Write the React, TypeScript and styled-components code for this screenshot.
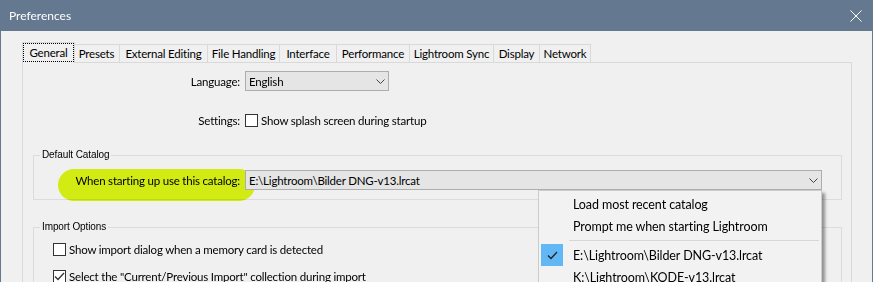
import styled, { createGlobalStyle } from "styled-components";

const GlobalStyle = createGlobalStyle`
  html, body {
    margin: 0;
    padding: 0;
    background: #f0f0f0;
  }
  body {
    font-family: Lato, "Noto Sans", sans-serif;
    font-size: 11.5px;
    letter-spacing: -0.2px;
    color: #000;
  }
`;

const tabs = [
  { label: "General", w: 53 },
  { label: "Presets", w: 47 },
  { label: "External Editing", w: 89 },
  { label: "File Handling", w: 73 },
  { label: "Interface", w: 58 },
  { label: "Performance", w: 74 },
  { label: "Lightroom Sync", w: 85 },
  { label: "Display", w: 47 },
  { label: "Network", w: 52 },
];

const Chevron = () => (
  <svg width="9" height="5" viewBox="0 0 9 5" aria-hidden="true">
    <polyline points="0.5,0.5 4.5,4.5 8.5,0.5" fill="none" stroke="#444" strokeWidth="1" />
  </svg>
);

const Tick = ({ color = "#222" }: { color?: string }) => (
  <svg width="11" height="9" viewBox="0 0 11 9" aria-hidden="true">
    <polyline points="1,4.5 4,7.5 10,1" fill="none" stroke={color} strokeWidth="1.3" />
  </svg>
);

export default function App() {
  return (
    <>
      <GlobalStyle />
      <Window>
        <TitleBar>
          <span>Preferences</span>
          <CloseIcon width="12" height="12" viewBox="0 0 12 12" aria-label="Close">
            <line x1="0.5" y1="0.5" x2="11.5" y2="11.5" stroke="#fff" strokeWidth="1" />
            <line x1="11.5" y1="0.5" x2="0.5" y2="11.5" stroke="#fff" strokeWidth="1" />
          </CloseIcon>
        </TitleBar>

        <Body>
          <TabBar>
            {tabs.map((t, i) => (
              <Tab key={t.label} $w={t.w} $active={i === 0} $after={i === 1 ? 2 : i > 1 ? 1 : 0}>
                {i === 0 ? <Focus>{t.label}</Focus> : t.label}
              </Tab>
            ))}
          </TabBar>

          <Panel>
            <FormGrid $label={217}>
              <Label>Language:</Label>
              <Combo $w={144}>
                <span>English</span>
                <Chevron />
              </Combo>

              <Label>Settings:</Label>
              <CheckRow>
                <Box />
                <span>Show splash screen during startup</span>
              </CheckRow>
            </FormGrid>

            <Group $top={18}>
              <Legend>Default Catalog</Legend>
              <FormGrid $label={206}>
                <Label>
                  <Marker />
                  When starting up use this catalog:
                </Label>
                <ComboWrap>
                  <Combo>
                    <span>E:\Lightroom\Bilder DNG-v13.lrcat</span>
                    <Chevron />
                  </Combo>
                  <Menu>
                    <MenuItem>
                      <CheckCell />
                      Load most recent catalog
                    </MenuItem>
                    <MenuItem>
                      <CheckCell />
                      Prompt me when starting Lightroom
                    </MenuItem>
                    <Separator />
                    <MenuItem>
                      <CheckCell $on>
                        <Tick />
                      </CheckCell>
                      E:\Lightroom\Bilder DNG-v13.lrcat
                    </MenuItem>
                    <MenuItem>
                      <CheckCell />
                      K:\Lightroom\KODE-v13.lrcat
                    </MenuItem>
                  </Menu>
                </ComboWrap>
              </FormGrid>
            </Group>

            <Group $top={20}>
              <Legend>Import Options</Legend>
              <CheckList>
                <CheckRow>
                  <Box />
                  <span>Show import dialog when a memory card is detected</span>
                </CheckRow>
                <CheckRow>
                  <Box>
                    <Tick color="#333" />
                  </Box>
                  <span>Select the "Current/Previous Import" collection during import</span>
                </CheckRow>
              </CheckList>
            </Group>
          </Panel>
        </Body>
      </Window>
    </>
  );
}

const Window = styled.div`
  width: 873px;
  height: 282px;
  box-sizing: border-box;
  overflow: hidden;
  display: flex;
  flex-direction: column;
  background: #f0f0f0;
  border-left: 1px solid #647890;
  border-right: 1px solid #647890;
`;

const TitleBar = styled.div`
  height: 31px;
  flex: none;
  display: flex;
  align-items: center;
  justify-content: space-between;
  padding: 0 10px 0 8px;
  background: #647890;
  color: #fff;
  font-size: 12px;
  letter-spacing: 0;
`;

const CloseIcon = styled.svg`
  display: block;
`;

const Body = styled.div`
  flex: 1;
  display: flex;
  flex-direction: column;
  padding: 11px 0 0 21px;
`;

const TabBar = styled.div`
  display: flex;
  align-items: flex-end;
  height: 20px;
  flex: none;
  position: relative;
  z-index: 1;
`;

const Tab = styled.div<{ $w: number; $active?: boolean; $after: number }>`
  box-sizing: border-box;
  width: ${(p) => p.$w}px;
  height: ${(p) => (p.$active ? 21 : 18)}px;
  margin-bottom: ${(p) => (p.$active ? -1 : 0)}px;
  margin-left: -${(p) => p.$after}px;
  position: relative;
  z-index: ${(p) => (p.$active ? 2 : 1)};
  display: flex;
  align-items: center;
  justify-content: center;
  border: 1px solid #d9d9d9;
  border-bottom: none;
  background: #f0f0f0;
  white-space: nowrap;
  padding: ${(p) => (p.$active ? "0 0 1px" : "0")};
`;

const Focus = styled.span`
  outline: 1px dotted #000;
  outline-offset: 0;
  padding: 0 5px;
  line-height: 17px;
`;

const Panel = styled.div`
  box-sizing: border-box;
  width: 830px;
  flex: 1;
  display: flex;
  flex-direction: column;
  padding-top: 8px;
  border: 1px solid #d9d9d9;
  background: #f0f0f0;
`;

const FormGrid = styled.div<{ $label: number }>`
  display: grid;
  grid-template-columns: ${(p) => p.$label}px 1fr;
  column-gap: 5px;
  row-gap: 19px;
  align-items: center;
`;

const Label = styled.div`
  position: relative;
  text-align: right;
  white-space: nowrap;
`;

const Marker = styled.span`
  position: absolute;
  left: 24px;
  top: -5px;
  width: 197px;
  height: 32px;
  border-radius: 16px;
  background: #dffb14;
  mix-blend-mode: multiply;
  pointer-events: none;
`;

const Combo = styled.div<{ $w?: number }>`
  box-sizing: border-box;
  width: ${(p) => (p.$w ? `${p.$w}px` : "auto")};
  height: 20px;
  display: flex;
  align-items: center;
  justify-content: space-between;
  padding: 0 3px 0 3px;
  border: 1px solid #adadad;
  background: #e5e5e5;
  white-space: nowrap;
  svg {
    display: block;
  }
`;

const ComboWrap = styled.div`
  position: relative;
`;

const CheckRow = styled.div`
  display: flex;
  align-items: center;
  gap: 3px;
  height: 20px;
  white-space: nowrap;
`;

const Box = styled.span`
  box-sizing: border-box;
  width: 13px;
  height: 13px;
  flex: none;
  display: flex;
  align-items: center;
  justify-content: center;
  border: 1px solid #333;
  background: #fff;
`;

const Group = styled.fieldset<{ $top: number }>`
  margin: ${(p) => p.$top}px 9px 0 10px;
  padding: 8px 19px 9px 0;
  min-width: 0;
  border: 1px solid #dcdcdc;
`;

const Legend = styled.legend`
  margin-left: 6px;
  padding: 0 2px;
  font-family: "Liberation Sans", Arial, sans-serif;
  font-size: 10px;
  letter-spacing: -0.1px;
  line-height: 14px;
`;

const CheckList = styled.div`
  display: flex;
  flex-direction: column;
  gap: 7px;
  padding-left: 19px;
  margin-top: -3px;
`;

const Menu = styled.div`
  position: absolute;
  top: 100%;
  right: 0;
  width: 284px;
  box-sizing: border-box;
  padding: 2px 0;
  border: 1px solid #cccccc;
  background: #f2f2f2;
  box-shadow: 3px 3px 3px rgba(0, 0, 0, 0.4);
  z-index: 5;
  font-size: 12.5px;
  letter-spacing: -0.1px;
`;

const MenuItem = styled.div`
  height: 22px;
  display: flex;
  align-items: center;
  gap: 10px;
  padding-left: 2px;
  white-space: nowrap;
`;

const CheckCell = styled.span<{ $on?: boolean }>`
  width: 22px;
  height: 22px;
  flex: none;
  display: flex;
  align-items: center;
  justify-content: center;
  background: ${(p) => (p.$on ? "#62b8f4" : "transparent")};
`;

const Separator = styled.div`
  height: 1px;
  margin: 3px 2px 3px 30px;
  background: #d7d7d7;
`;
